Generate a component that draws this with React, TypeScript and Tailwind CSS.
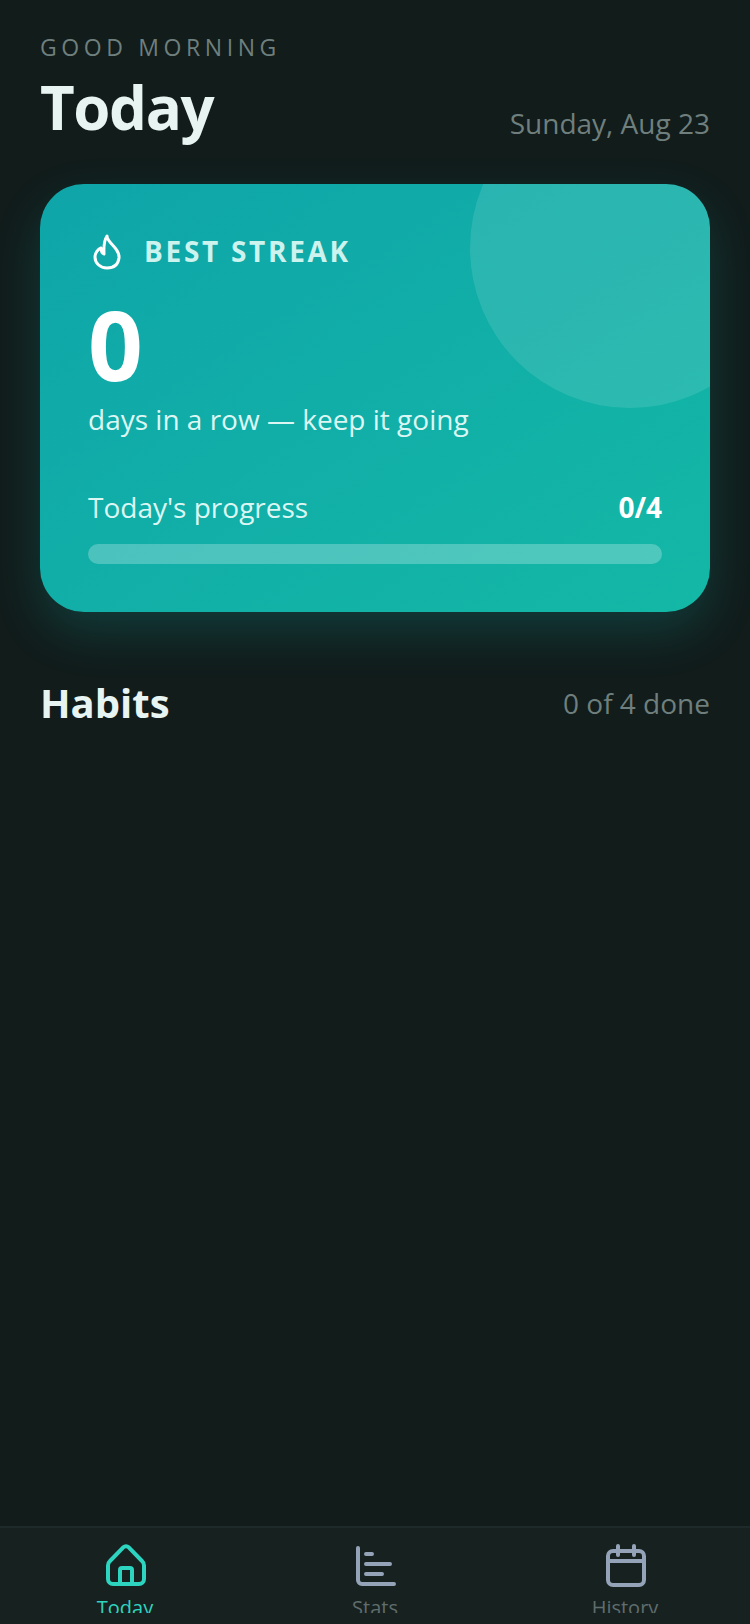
import React from 'react';

const HomeIcon = () => (
  <svg width="48" height="48" viewBox="0 0 48 48" fill="none" stroke="currentColor" strokeWidth="4" strokeLinejoin="round" strokeLinecap="round">
    <path d="M21.5 5.2a3.5 3.5 0 0 1 5 0L40 19a6 6 0 0 1 2 4.4V37a5 5 0 0 1-5 5H11a5 5 0 0 1-5-5V23.4a6 6 0 0 1 2-4.4Z" />
    <path d="M18 42V28a2 2 0 0 1 2-2h8a2 2 0 0 1 2 2v14" />
  </svg>
);

const StatsIcon = () => (
  <svg width="48" height="48" viewBox="0 0 48 48" fill="none" stroke="currentColor" strokeWidth="4" strokeLinecap="round">
    <path d="M6 6v32a4 4 0 0 0 4 4h32" />
    <path d="M14 12h6M14 22h24M14 32h16" />
  </svg>
);

const CalendarIcon = () => (
  <svg width="48" height="48" viewBox="0 0 48 48" fill="none" stroke="currentColor" strokeWidth="4" strokeLinecap="round">
    <rect x="6" y="9" width="36" height="34" rx="5" />
    <path d="M6 19h36M16 4v9M32 4v9" />
  </svg>
);

const FlameIcon = () => (
  <svg width="36" height="36" viewBox="0 0 36 36" fill="none" stroke="#ffffff" strokeWidth="3" strokeLinejoin="round" strokeLinecap="round">
    <path d="M18 2C18 9 31 14 30 24C29 31 24 34 18 34C11 34 6 29 6 23C6 19 9 15 12 14C12 17 13 19 15 20C15 15 14 8 18 2Z" />
  </svg>
);

const navItems = [
  { id: 'today', label: 'Today', icon: <HomeIcon />, active: true },
  { id: 'stats', label: 'Stats', icon: <StatsIcon />, active: false },
  { id: 'history', label: 'History', icon: <CalendarIcon />, active: false },
];

export default function App() {
  return (
    <div className="flex flex-col h-[1624px] overflow-hidden bg-[#111c1b] font-['Open_Sans',sans-serif]">
      <main className="flex-1 px-10 pt-[29px]">
        {/* Header */}
        <p className="text-[23px] leading-[36px] tracking-[4.6px] text-[#6f7f7d]">GOOD MORNING</p>
        <div className="flex items-end justify-between mt-[6px]">
          <h1 className="text-[60px] leading-[72px] font-bold tracking-[-1.4px] text-[#e8f4f2]">Today</h1>
          <span className="text-[28px] leading-[40px] text-[#6f7f7d]">Sunday, Aug 23</span>
        </div>

        {/* Streak card */}
        <div className="relative h-[428px] mt-[41px] rounded-[44px] overflow-hidden bg-gradient-to-br from-[#0fa5a9] to-[#14b8a6] p-12 shadow-[0_20px_48px_rgba(20,184,180,0.2)]">
          <div className="absolute left-[430px] top-[-96px] w-[320px] h-[320px] rounded-full bg-white/[0.11]" />
          <div className="relative flex items-center gap-[19px] h-[36px] mt-[1px] ml-[1px]">
            <span className="mt-[2px]"><FlameIcon /></span>
            <span className="text-[28px] leading-[36px] font-bold tracking-[2.7px] text-[#cdf3ee]">BEST STREAK</span>
          </div>
          <p className="relative text-[96px] leading-[96px] font-bold text-white mt-[27px]">0</p>
          <p className="relative text-[28px] leading-[40px] text-[#dcf7f3] mt-[7px]">days in a row — keep it going</p>
          <div className="relative flex items-center justify-between mt-[48px]">
            <span className="text-[28px] leading-[40px] text-[#dcf7f3]">Today's progress</span>
            <span className="text-[28px] leading-[40px] font-bold text-white">0/4</span>
          </div>
          <div className="relative h-5 rounded-[10px] bg-white/25 mt-[17px]" />
        </div>

        {/* Habits */}
        <div className="flex items-center justify-between mt-[65px]">
          <h2 className="text-[40px] leading-[52px] font-bold text-[#e8f4f2]">Habits</h2>
          <span className="text-[28px] leading-[40px] text-[#6f7f7d]">0 of 4 done</span>
        </div>
      </main>

      {/* Bottom nav */}
      <nav className="h-[98px] border-t-2 border-[#1e2a29] bg-[#172120] shrink-0">
        <div className="grid grid-cols-3 h-[85px] overflow-hidden">
          {navItems.map((item) => (
            <div key={item.id} className="flex flex-col items-center pt-[14px]">
              <span className={`ml-[2px] ${item.active ? 'text-[#2dd4bf]' : 'text-[#94a3b8]'}`}>{item.icon}</span>
              <span className={`text-[20px] leading-[30px] mt-[3px] ${item.active ? 'text-[#2dd4bf]' : 'text-[#5f6d6c]'}`}>{item.label}</span>
            </div>
          ))}
        </div>
      </nav>
    </div>
  );
}
